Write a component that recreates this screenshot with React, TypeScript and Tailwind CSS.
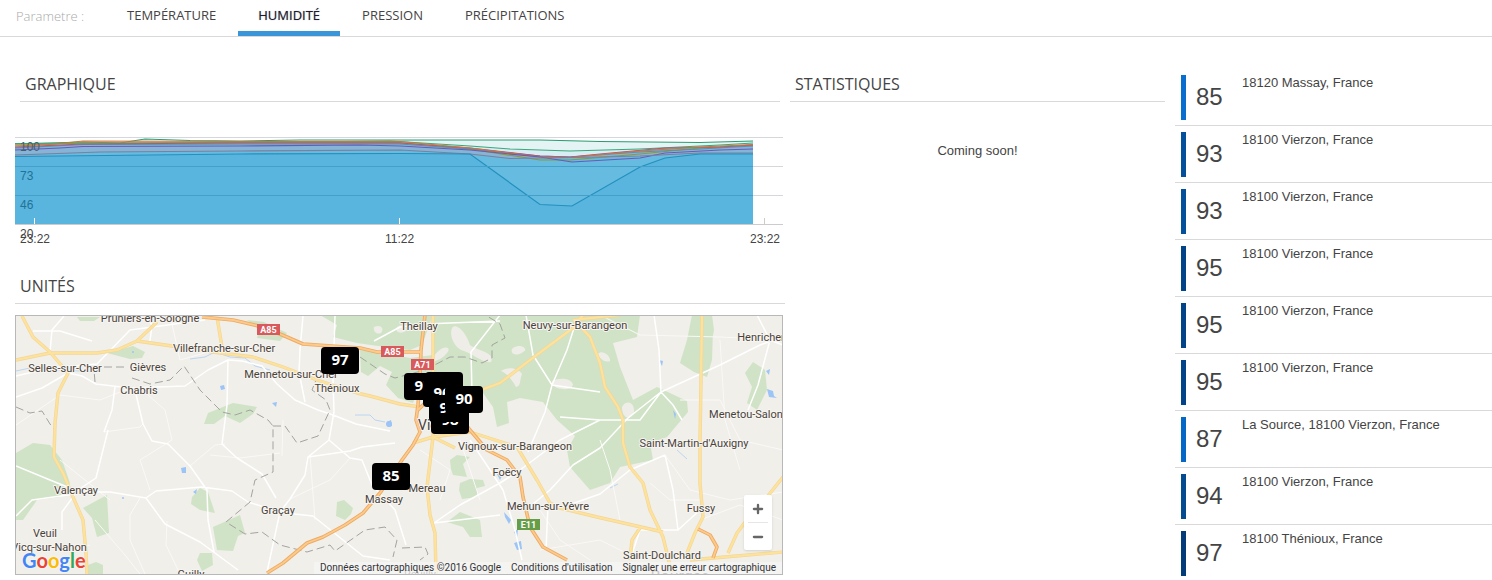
import { Minus, Plus } from "lucide-react";

const tabs = ["Température", "Humidité", "Pression", "Précipitations"];

const stations = [
  { value: 85, place: "18120 Massay, France", bar: "bg-[#0a6ecf]" },
  { value: 93, place: "18100 Vierzon, France", bar: "bg-[#04509a]" },
  { value: 93, place: "18100 Vierzon, France", bar: "bg-[#04509a]" },
  { value: 95, place: "18100 Vierzon, France", bar: "bg-[#034488]" },
  { value: 95, place: "18100 Vierzon, France", bar: "bg-[#034488]" },
  { value: 95, place: "18100 Vierzon, France", bar: "bg-[#034488]" },
  { value: 87, place: "La Source, 18100 Vierzon, France", bar: "bg-[#0567c6]" },
  { value: 94, place: "18100 Vierzon, France", bar: "bg-[#044b90]" },
  { value: 97, place: "18100 Thénioux, France", bar: "bg-[#033c78]" },
];

const series = [
  { color: "#2b9c72", points: "15,144 83,142 120,143 145,139 190,140.5 240,141 300,140 400,140 540,140 600,141.5 700,142.5 753,141" },
  { color: "#3aa77a", points: "15,143.5 130,143 300,142 390,141 470,146 510,149 570,151 640,149 720,145 753,143" },
  { color: "#8a9a3c", points: "15,146 83,143 240,142.5 400,142.5 470,149 540,160 570,160 640,154 700,148 753,145" },
  { color: "#5b8fb0", points: "15,148 83,144.5 240,144 400,144 470,149 540,156 570,157 640,152 700,149 753,146" },
  { color: "#b0587a", points: "15,147 83,144 240,143 400,143 470,148 540,156 570,157 600,154 665,148 720,147 753,145" },
  { color: "#c8783c", points: "15,145 55,144 83,141 240,141.5 400,141.5 470,148 540,157 570,157.5 640,151 700,147 753,144.5" },
  { color: "#6a5ab8", points: "15,150 60,148 83,146.5 240,146 360,145 400,146 470,150 540,157 572,162 640,158 665,153 720,150 753,149" },
  { color: "#7d7f9c", points: "15,155 100,152 240,151 400,150 470,154 510,158.5 540,158 600,157 640,156 700,153 753,153" },
  { color: "#2390bd", points: "15,156.5 240,154 400,153.5 470,154 540,204.5 572,206 640,167 665,158 700,154 753,154" },
];

const forests = [
  "M320 315L337 325 333 337 357 343 385 347 410 350 422 345 433 315Z",
  "M360 350L382 353 410 358 433 355 433 378 420 385 413 403 398 398 386 385 392 372 380 366 368 376 361 372Z",
  "M433 315H640L637 337 613 343 620 367 633 400 657 387 687 401 688 412 667 437 650 443 653 460 620 467 610 483 590 490 570 467 567 450 575 436 557 420 543 402 520 398 507 402 509 423 497 427 493 407 483 393 433 378Z",
  "M692 315H700L713 330 712 360 707 377 694 372 680 363 687 340Z",
  "M700 315H712L714 330 706 372 700 372Z",
  "M753 362L765 370 767 390 757 410 747 403 752 387 745 373Z",
  "M16 453L33 443 50 445 62 460 70 483 60 497 37 500 23 520 16 520Z",
  "M83 508L107 495 109 533 97 537 92 518Z",
  "M192 497L200 488 208 492 215 513 200 510 191 504Z",
  "M213 527L240 515 245 533 238 536 233 551 217 550Z",
  "M200 553H212L213 565 202 571 197 560Z",
  "M88 565L96 562 103 565V574H88Z",
  "M337 502L344 500 353 508 351 514 345 520 336 516Z",
  "M107 353L133 346 145 352 142 358 130 359Z",
  "M77 317H100L94 321 80 321Z",
  "M204 424L208 413 233 403 257 407 253 414 240 423 225 416 214 424Z",
  "M247 320L264 322 287 333 280 341 257 338 259 330Z",
  "M450 460L457 455 470 457 463 464 467 477 453 475 451 469Z",
  "M460 483L470 479 483 480 485 486 477 488 477 497 462 499 459 490Z",
  "M447 522L460 512 480 520 482 537 470 537 463 527Z",
];

const clearings = [
  "M452 328C456 322 466 332 470 345 475 350 496 352 491 362 484 364 472 353 461 350 454 346 449 336 452 328Z",
  "M512 349C519 342 530 349 523 352 516 357 510 354 512 349Z",
  "M501 371C508 366 519 368 522 374 519 383 521 386 516 387 512 380 508 374 501 371Z",
  "M552 381C560 377 572 378 573 385 570 392 556 389 552 385Z",
  "M598 354C602 349 611 356 610 361 605 363 600 359 598 354Z",
  "M622 407C626 399 635 402 634 412 631 421 622 419 622 407Z",
  "M434 356C442 344 454 346 446 354 441 360 438 359 434 362Z",
  "M397 327C403 322 410 330 404 332 398 334 395 331 397 327Z",
  "M374 327C380 324 385 328 381 333 376 335 373 331 374 327Z",
];

const minorRoads =
  "M16 376L50 368 97 364 130 330 205 320M50 352L52 330 64 316M33 331L60 331 92 341M150 341L152 325 146 316" +
  "M16 397L42 388 68 373 82 376 96 384 130 388 185 386 208 370 228 360 242 361 262 366 277 384 295 400 318 410 333 415 356 424 390 431" +
  "M228 360L227 405 222 444 237 458 262 474 276 498M135 390L143 424 152 441 168 444 190 466 207 490 208 520 214 552" +
  "M108 430L96 478 78 490 62 512 62 530M82 492L110 492 146 498 165 524 200 542 238 570M146 498L156 491 202 487 232 491 248 502 280 512" +
  "M16 516L32 500 75 494M16 466L50 480 70 488M115 387L112 410 104 432" +
  "M303 316L300 350 299 372 305 402M335 316L333 380 334 412 329 440 308 457 305 475 290 499 280 512 267 572" +
  "M329 440L350 458 362 460 372 485 395 510 406 545M308 457L350 451 362 447 395 443M276 512L313 516 338 536 363 556 390 560" +
  "M374 341L400 327 425 324 500 321M472 393L471 352 500 315M526 315L533 355 552 385 600 392M574 328L567 350 552 385 545 412 528 452" +
  "M628 418L661 392 720 365 760 345 783 337M654 315L659 350 661 392 673 405 682 420M661 392L640 420 600 420 560 417" +
  "M628 418L600 448 573 465 550 490 528 508M783 345L770 340 757 315M770 340L758 385 748 410" +
  "M434 523L460 505 500 483 520 470 560 440 600 420M434 523L500 515M470 440L490 470 503 490 515 530 522 560" +
  "M560 508L600 494 630 470 665 455M665 455L673 490 678 530 700 510M678 530L640 530 630 560" +
  "M548 505L546 550";

const faintRoads =
  "M16 425L60 395 100 400 130 388M170 315L180 360 215 350M60 460L110 500M148 395L165 410 172 440 140 460 150 490M104 432L140 427 143 424" +
  "M140 498L130 515 130 540 145 574M90 545L75 550M95 520L125 555 140 574M167 521L166 545 180 574M210 455L240 458 280 453" +
  "M190 466L215 445 225 444M283 420L282 456M310 455L315 520M290 499L330 480 350 458M420 450L450 470 440 500M460 440L480 500" +
  "M600 440L610 470 620 520M680 400L720 400 740 440 783 450M650 483L670 500 700 500M540 550L600 540 640 560M720 340L725 420 740 470" +
  "M600 315L640 335 720 337 783 340M540 510L560 540 590 560M700 520L740 505 783 520M665 455L690 490 730 500 783 492";

const secondaryRoads =
  "M22 316L33 337 50 352 68 373 58 393 55 423 54 457 63 473 73 497 83 520 86 553 87 574" +
  "M16 360L50 353 97 353 117 350 137 341 172 346 213 352 253 357 283 367 317 380 357 393 370 396 400 404 420 407" +
  "M157 322L137 341M217 317L223 353M433 315V437L427 487 430 515 435 533 436 574M413 443L433 437 455 448" +
  "M473 393L500 383 530 360 573 328 583 315M577 323L590 337 600 363 605 387 618 407 623 420 623 443 630 467 643 483 650 510 663 537 672 574" +
  "M702 315L700 443 700 483 703 517 695 533 687 553M470 432L517 447 537 480 550 503 560 508 597 517 663 532M433 437L470 432" +
  "M783 477L767 497 752 513 737 533 728 553M690 560L713 558 783 552M640 528L632 540 630 560M573 320L620 315";

const motorways =
  "M202 317L233 320 263 327 287 337 303 344 360 348 377 352 420 352" +
  "M425 315L421 350 420 377 418 405 416 420 420 432 413 445 402 460 380 493 363 513 345 525 323 537 307 543 283 563 267 573" +
  "M418 410L428 400 455 410 470 430 487 450 507 460 520 477 523 497 530 527 543 547 567 560" +
  "M698 529L710 535 717 547 713 558";

const borders =
  "M16 407L30 413 42 411 50 424 55 430M95 382L94 370M104 367H124M132 378L150 384 170 380 184 366 200 390 222 412 235 415 250 410 268 420 273 426V472L255 480 250 502 226 522 245 534 262 532 280 545 307 552 330 545 335 551 365 530 385 527 397 540 393 557M402 548L425 547 428 554 420 560" +
  "M273 426L285 426 297 443 318 436 330 410 326 400 312 390 316 380M360 357L385 374 395 378 425 370 450 357 465 357 482 363 492 358 492 345 505 338 500 324 487 316";

const labels = [
  { x: 150, y: 322, text: "Pruniers-en-Sologne" },
  { x: 224, y: 352, text: "Villefranche-sur-Cher" },
  { x: 65, y: 372, text: "Selles-sur-Cher" },
  { x: 148, y: 371, text: "Gièvres" },
  { x: 139, y: 394, text: "Chabris" },
  { x: 291, y: 378, text: "Mennetou-sur-Cher" },
  { x: 337, y: 392, text: "Thénioux" },
  { x: 419, y: 330, text: "Theillay" },
  { x: 575, y: 329, text: "Neuvy-sur-Barangeon" },
  { x: 764, y: 341, text: "Henrichem" },
  { x: 746, y: 418, text: "Menetou-Salon" },
  { x: 694, y: 447, text: "Saint-Martin-d'Auxigny" },
  { x: 515, y: 450, text: "Vignoux-sur-Barangeon" },
  { x: 507, y: 476, text: "Foëcy" },
  { x: 427, y: 492, text: "Mereau" },
  { x: 384, y: 503, text: "Massay" },
  { x: 548, y: 510, text: "Mehun-sur-Yèvre" },
  { x: 701, y: 512, text: "Fussy" },
  { x: 662, y: 559, text: "Saint-Doulchard" },
  { x: 76, y: 494, text: "Valençay" },
  { x: 278, y: 514, text: "Graçay" },
  { x: 45, y: 537, text: "Veuil" },
  { x: 49, y: 551, text: "Vicq-sur-Nahon" },
  { x: 191, y: 578, text: "Guilly" },
  { x: 420, y: 578, text: "Reuilly" },
];

// Later pins are drawn over earlier ones
const pins = [
  { x: 321, y: 347, value: 97 },
  { x: 372, y: 463, value: 85 },
  { x: 404, y: 373, value: 93 },
  { x: 425, y: 372, value: 93 },
  { x: 423, y: 380, value: 96 },
  { x: 431, y: 407, value: 98 },
  { x: 429, y: 395, value: 95 },
  { x: 445, y: 386, value: 90 },
];

const roadSigns = [
  { x: 257, y: 324, text: "A85", color: "#d85a5c" },
  { x: 381, y: 346, text: "A85", color: "#d85a5c" },
  { x: 411, y: 359, text: "A71", color: "#d85a5c" },
  { x: 517, y: 519, text: "E11", color: "#659d48" },
];

const ParameterNav = () => (
  <header className="flex items-start border-b border-[#d9d9d9] pl-4 font-['Open_Sans',sans-serif] leading-8">
    <span className="w-[91px] text-[13px] font-light text-[#aaaaaa]">Parametre :</span>
    <nav className="flex gap-0.5">
      {tabs.map((tab) => (
        <button
          key={tab}
          className={
            tab === "Humidité"
              ? "border-b-[5px] border-[#3a96d8] px-5 text-[13px] leading-[31px] text-[#1c1a2c] uppercase [text-shadow:0_0_1px_#1c1a2c80]"
              : "border-b-[5px] border-transparent px-5 text-[13px] leading-[31px] text-[#444444] uppercase"
          }
        >
          {tab}
        </button>
      ))}
    </nav>
  </header>
);

const HumidityChart = () => (
  <svg viewBox="15 130 768 120" className="block h-auto w-full" role="img" aria-label="Humidité">
    <path d="M15 137.5H783M15 166.5H783M15 195.5H783" stroke="#d4d8dc" shapeRendering="crispEdges" />
    <polygon points={`${series[0].points} 753,224 15,224`} fill="#e4f3f4" />
    <polygon points={`${series[1].points} 753,224 15,224`} fill="#d8eef4" />
    <polygon points={`${series[4].points} 753,224 15,224`} fill="#86b4d6" />
    <polygon points={`${series[7].points} 753,224 15,224`} fill="#66bbe1" />
    <polygon points={`${series[8].points} 753,224 15,224`} fill="#5ab5de" />
    {series.map((line) => (
      <polyline key={line.color} points={line.points} fill="none" stroke={line.color} strokeWidth="1.2" />
    ))}
    <path d="M15 166.5H753M15 195.5H753" stroke="#469fc9" shapeRendering="crispEdges" />
    <path d="M15 224.5H783M764.5 218V224" stroke="#cccccc" shapeRendering="crispEdges" />
    <path d="M34.5 218V224M399.5 218V224" stroke="#ffffff" shapeRendering="crispEdges" />
    <g className="font-['Liberation_Sans',sans-serif] text-[12px]" fill="#1f7396">
      <text x="20" y="151" fill="#45606b">100</text>
      <text x="20" y="180">73</text>
      <text x="20" y="209">46</text>
      <text x="20" y="238" fill="#444444">20</text>
      <text x="20" y="243" fill="#444444">23:22</text>
      <text x="385" y="243" fill="#444444">11:22</text>
      <text x="750" y="243" fill="#444444">23:22</text>
    </g>
  </svg>
);

const UnitsMap = () => (
  <div className="relative border border-[#b8b8b8] bg-[#f0efea]">
    <svg
      viewBox="16 316 766 258"
      className="block h-auto w-full font-[Roboto,sans-serif]"
      role="img"
      aria-label="Unités autour de Vierzon"
    >
      <path d={forests.join("")} fill="#d0e3c6" />
      <path d={clearings.join("")} fill="#efede8" />
      <g fill="#9cc4f6">
        <path d="M387 422L391 420 392 426 388 427ZM220 386L224 385 225 389 221 390ZM272 403L277 402 276 407ZM181 468L186 467 186 473 182 473ZM193 492L197 489 196 494Z" />
        <path d="M766 371L770 369 769 375ZM767 389L773 391 774 396 777 398 769 397ZM659 360L663 361 662 366ZM673 410L676 414 675 419ZM514 543L521 541 522 549 517 550ZM504 512L511 520 509 524 505 517ZM514 532L518 529 517 538ZM496 472L502 476 500 480Z" />
        <circle cx="389" cy="424" r="3" />
        <circle cx="133" cy="352" r="1" />
        <circle cx="123" cy="498" r="1" />
      </g>
      <path
        d="M190 359L205 357 215 352 230 357 245 358 255 366 270 370M355 415L370 415 375 420 385 422M16 371L30 368 95 372M610 488L618 484M677 450L687 459"
        fill="none"
        stroke="#bcd4f3"
      />
      <path d={faintRoads} fill="none" stroke="#faf9f7" />
      <path d={minorRoads} fill="none" stroke="#ffffff" strokeWidth="1.5" strokeLinejoin="round" />
      <path d={borders} fill="none" stroke="#a3a3a0" strokeDasharray="8 4" />
      <path d={secondaryRoads} fill="none" stroke="#f4d596" strokeWidth="3.4" strokeLinejoin="round" />
      <path d={secondaryRoads} fill="none" stroke="#fde29c" strokeWidth="2.2" strokeLinejoin="round" />
      <path d={motorways} fill="none" stroke="#eeaa62" strokeWidth="3.6" strokeLinejoin="round" />
      <path d={motorways} fill="none" stroke="#fbca8c" strokeWidth="1.8" strokeLinejoin="round" />

      {roadSigns.map((sign) => (
        <g key={`${sign.x}-${sign.y}`}>
          <rect x={sign.x} y={sign.y} width="23" height="11" fill={sign.color} />
          <text x={sign.x + 11.5} y={sign.y + 9} textAnchor="middle" fill="#ffffff" className="text-[9px] font-bold">
            {sign.text}
          </text>
        </g>
      ))}

      <g
        textAnchor="middle"
        fill="#4a4238"
        stroke="#f6f5f2"
        strokeWidth="2"
        strokeLinejoin="round"
        paintOrder="stroke"
        className="text-[11px]"
      >
        {labels.map((label) => (
          <text key={label.text} x={label.x} y={label.y}>
            {label.text}
          </text>
        ))}
        <text x="418" y="430" textAnchor="start" className="text-[14px]">
          Vierzon
        </text>
        <text x="680" y="582" className="text-[16px]">
          Bourges
        </text>
      </g>

      {pins.map((pin) => (
        <g key={`${pin.x}-${pin.y}`}>
          <rect x={pin.x} y={pin.y} width="38" height="27" rx="4" fill="#000000" />
          <text
            x={pin.x + 19}
            y={pin.y + 18}
            textAnchor="middle"
            fill="#ffffff"
            className="font-['Open_Sans',sans-serif] text-[15px] font-bold"
          >
            {pin.value}
          </text>
        </g>
      ))}
    </svg>

    <div className="absolute right-2.5 bottom-6 flex w-7 flex-col items-center rounded-xs bg-white text-[#666666] shadow">
      <button aria-label="Zoom avant" className="flex h-[27px] w-full items-center justify-center">
        <Plus size={14} strokeWidth={4} />
      </button>
      <div className="h-px w-5 bg-[#e6e6e6]" />
      <button aria-label="Zoom arrière" className="flex h-[27px] w-full items-center justify-center">
        <Minus size={14} strokeWidth={4} />
      </button>
    </div>

    <a
      href="#google"
      className="absolute bottom-0.5 left-1.5 font-[Lato,sans-serif] text-[20px] leading-6 font-bold [text-shadow:0_0_2px_white]"
    >
      <span className="text-[#4285f4]">G</span>
      <span className="text-[#ea4335]">o</span>
      <span className="text-[#fbbc05]">o</span>
      <span className="text-[#4285f4]">g</span>
      <span className="text-[#34a853]">l</span>
      <span className="text-[#ea4335]">e</span>
    </a>

    <div className="absolute right-0 bottom-0 flex gap-2.5 bg-[#f5f5f5]/75 px-1.5 font-[Roboto,sans-serif] text-[10px] leading-3 text-[#333333]">
      <span>Données cartographiques ©2016 Google</span>
      <a href="#conditions">Conditions d'utilisation</a>
      <a href="#signaler">Signaler une erreur cartographique</a>
    </div>
  </div>
);

const App = () => {
  return (
    <div className="min-h-screen bg-white font-['Liberation_Sans',Arial,sans-serif] text-[#444444]">
      <ParameterNav />

      <main className="grid grid-cols-[785fr_385fr_322fr]">
        <div className="pl-[15px]">
          <section>
            <h2 className="mx-[5px] border-b border-[#d9d9d9] pt-9 pb-1.5 pl-[5px] font-['Open_Sans',sans-serif] text-base leading-[22px] text-[#444444]">
              GRAPHIQUE
            </h2>
            <div className="mt-7 mr-0.5">
              <HumidityChart />
            </div>
          </section>

          <section>
            <h2 className="border-b border-[#d9d9d9] pt-[25px] pb-1.5 pl-[5px] font-['Open_Sans',sans-serif] text-base leading-[22px] text-[#444444]">
              UNITÉS
            </h2>
            <div className="mt-[11px] mr-0.5">
              <UnitsMap />
            </div>
          </section>
        </div>

        <section className="px-[5px]">
          <h2 className="border-b border-[#d9d9d9] pt-9 pb-1.5 pl-[5px] font-['Open_Sans',sans-serif] text-base leading-[22px] text-[#444444]">
            STATISTIQUES
          </h2>
          <p className="pt-10 text-center text-[13px] leading-[18px]">Coming soon!</p>
        </section>

        <ul className="pt-8 pl-[5px]">
          {stations.map((station, index) => (
            <li key={index} className="flex border-b border-[#d9d9d9] px-1.5 pt-1.5 pb-[5px] last:border-0">
              <div className={`h-[45px] w-[5px] shrink-0 ${station.bar}`} />
              <span className="w-14 pl-2.5 text-2xl leading-[43px]">{station.value}</span>
              <span className="text-[13px] leading-[15px]">{station.place}</span>
            </li>
          ))}
        </ul>
      </main>
    </div>
  );
};

export default App;
